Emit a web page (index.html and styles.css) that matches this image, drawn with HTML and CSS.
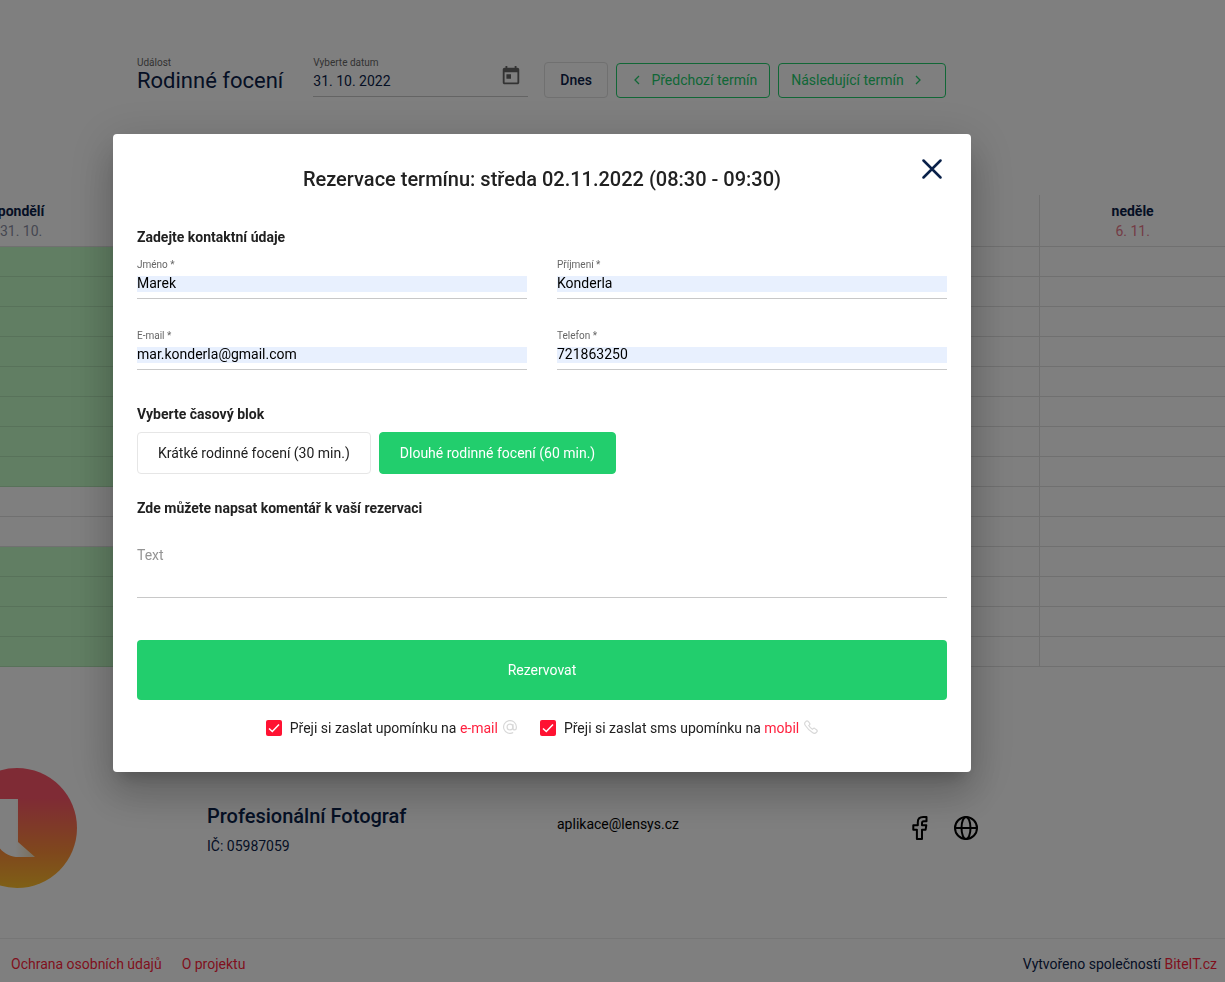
FILE: index.html
```html
<!DOCTYPE html>
<html lang="cs">
<head>
    <meta charset="UTF-8">
    <meta name="viewport" content="width=device-width, initial-scale=1.0">
    <title>Rodinné focení</title>
    <link rel="stylesheet" href="styles.css">
</head>
<body>
    <div class="page">
        <main class="content">
            <header class="toolbar">
                <div class="event">
                    <div class="small-label">Událost</div>
                    <h1>Rodinné focení</h1>
                </div>
                <div class="date-field">
                    <div class="date-text">
                        <label class="small-label" for="date">Vyberte datum</label>
                        <input type="text" id="date" value="31. 10. 2022">
                    </div>
                    <button class="icon-btn" aria-label="Otevřít kalendář">
                        <svg width="22" height="22" viewBox="0 0 24 24" fill="currentColor"><path d="M19 3h-1V1h-2v2H8V1H6v2H5c-1.1 0-2 .9-2 2v14c0 1.1.9 2 2 2h14c1.1 0 2-.9 2-2V5c0-1.1-.9-2-2-2zm0 16H5V8h14v11zM7 10h5v5H7z"/></svg>
                    </button>
                </div>
                <div class="toolbar-buttons">
                    <button class="btn btn-today">Dnes</button>
                    <button class="btn btn-outline">
                        <svg width="10" height="10" viewBox="0 0 10 10"><path d="M7 1L3 5l4 4"/></svg>
                        Předchozí termín
                    </button>
                    <button class="btn btn-outline btn-next">
                        Následující termín
                        <svg width="10" height="10" viewBox="0 0 10 10"><path d="M3 1l4 4-4 4"/></svg>
                    </button>
                </div>
            </header>

            <table class="calendar">
                <thead>
                    <tr>
                        <th>pondělí<span>31. 10.</span></th>
                        <th></th>
                        <th></th>
                        <th></th>
                        <th></th>
                        <th></th>
                        <th class="sunday">neděle<span>6. 11.</span></th>
                    </tr>
                </thead>
                <tbody>
                    <tr><td class="free"></td><td></td><td></td><td></td><td></td><td></td><td></td></tr>
                    <tr><td class="free"></td><td></td><td></td><td></td><td></td><td></td><td></td></tr>
                    <tr><td class="free"></td><td></td><td></td><td></td><td></td><td></td><td></td></tr>
                    <tr><td class="free"></td><td></td><td></td><td></td><td></td><td></td><td></td></tr>
                    <tr><td class="free"></td><td></td><td></td><td></td><td></td><td></td><td></td></tr>
                    <tr><td class="free"></td><td></td><td></td><td></td><td></td><td></td><td></td></tr>
                    <tr><td class="free"></td><td></td><td></td><td></td><td></td><td></td><td></td></tr>
                    <tr><td class="free"></td><td></td><td></td><td></td><td></td><td></td><td></td></tr>
                    <tr><td></td><td></td><td></td><td></td><td></td><td></td><td></td></tr>
                    <tr><td></td><td></td><td></td><td></td><td></td><td></td><td></td></tr>
                    <tr><td class="free"></td><td></td><td></td><td></td><td></td><td></td><td></td></tr>
                    <tr><td class="free"></td><td></td><td></td><td></td><td></td><td></td><td></td></tr>
                    <tr><td class="free"></td><td></td><td></td><td></td><td></td><td></td><td></td></tr>
                    <tr><td class="free"></td><td></td><td></td><td></td><td></td><td></td><td></td></tr>
                </tbody>
            </table>

            <section class="company">
                <svg class="logo" width="120" height="120" viewBox="0 0 120 120">
                    <defs>
                        <linearGradient id="sunset" x1="0" y1="0" x2="0" y2="1">
                            <stop offset="0.25" stop-color="#ff566a"/>
                            <stop offset="0.7" stop-color="#ff8f3a"/>
                            <stop offset="1" stop-color="#ffc02c"/>
                        </linearGradient>
                        <linearGradient id="fold" x1="0" y1="0" x2="1" y2="0">
                            <stop offset="0.5" stop-color="#fff"/>
                            <stop offset="1" stop-color="#f3dcb4"/>
                        </linearGradient>
                    </defs>
                    <circle cx="60" cy="60" r="60" fill="url(#sunset)"/>
                    <path d="M38 31h23v43l17 15H62C50 89 42 82 38 72z" fill="url(#fold)"/>
                </svg>
                <div class="company-name">
                    <h2>Profesionální Fotograf</h2>
                    <p>IČ: 05987059</p>
                </div>
                <p class="company-mail">aplikace@lensys.cz</p>
                <div class="social">
                    <a href="#" aria-label="Facebook">
                        <svg width="24" height="24" viewBox="0 0 24 24"><path d="M18.5 1h-3.300c-3.700 0-5.400 2.300-5.400 5.200v3.100H5.300v4.400h3.600V23h5.100v-9.300h3.600l.7-4.400h-4.300V7.100c0-1.300.6-1.900 1.800-1.900h2.700z"/></svg>
                    </a>
                    <a href="#" aria-label="Web">
                        <svg width="24" height="24" viewBox="0 0 24 24"><circle cx="12" cy="12" r="11"/><path d="M1 12h22"/><ellipse cx="12" cy="12" rx="4.5" ry="11"/></svg>
                    </a>
                </div>
            </section>
        </main>

        <footer class="bottom-bar">
            <nav>
                <a href="#">Ochrana osobních údajů</a>
                <a href="#">O projektu</a>
            </nav>
            <p>Vytvořeno společností <a href="#">BiteIT.cz</a></p>
        </footer>
    </div>

    <div class="overlay">
        <form class="modal" role="dialog" aria-labelledby="modal-title">
            <button type="button" class="close" aria-label="Zavřít">
                <svg width="20" height="20" viewBox="0 0 20 20"><path d="M1.500 1.500l17 17M18.500 1.500l-17 17"/></svg>
            </button>
            <h2 class="modal-title" id="modal-title">Rezervace termínu: středa 02.11.2022 (08:30 - 09:30)</h2>

            <h3>Zadejte kontaktní údaje</h3>
            <div class="fields">
                <div class="field">
                    <label class="small-label" for="firstName">Jméno *</label>
                    <input type="text" id="firstName" value="Marek">
                </div>
                <div class="field">
                    <label class="small-label" for="lastName">Příjmení *</label>
                    <input type="text" id="lastName" value="Konderla">
                </div>
                <div class="field">
                    <label class="small-label" for="email">E-mail *</label>
                    <input type="email" id="email" value="mar.konderla@gmail.com">
                </div>
                <div class="field">
                    <label class="small-label" for="phone">Telefon *</label>
                    <input type="tel" id="phone" value="721863250">
                </div>
            </div>

            <h3>Vyberte časový blok</h3>
            <div class="blocks">
                <button type="button" class="block">Krátké rodinné focení (30 min.)</button>
                <button type="button" class="block selected">Dlouhé rodinné focení (60 min.)</button>
            </div>

            <h3><label for="comment">Zde můžete napsat komentář k vaší rezervaci</label></h3>
            <textarea id="comment" placeholder="Text"></textarea>

            <button type="submit" class="submit">Rezervovat</button>

            <div class="reminders">
                <label>
                    <input type="checkbox" checked>
                    <span>Přeji si zaslat upomínku na <em>e-mail</em></span>
                    <svg width="14" height="14" viewBox="0 0 24 24"><circle cx="12" cy="12" r="5"/><path d="M17 7v6.500c0 2 1.200 3.500 3 3.500s3-1.800 3-5A11 11 0 1 0 17.500 21.500"/></svg>
                </label>
                <label>
                    <input type="checkbox" checked>
                    <span>Přeji si zaslat sms upomínku na <em>mobil</em></span>
                    <svg width="14" height="14" viewBox="0 0 24 24"><path d="M15 22c1.800 1.200 4.500 1 6-.6l.9-1c.9-.9.9-2.300 0-3.200l-3-2.500c-.9-.9-2.300-.9-3.200 0l-1.200 1.200c-2.500-1.500-4.900-3.900-6.400-6.400l1.200-1.200c.9-.9.9-2.300 0-3.200L6.800 2.100c-.9-.9-2.300-.9-3.200 0l-1 1C1 4.600.8 7.200 2 9c3.400 5.200 7.800 9.600 13 13z"/></svg>
                </label>
            </div>
        </form>
    </div>
</body>
</html>
```
FILE: styles.css
```css
* {
    margin: 0;
    padding: 0;
    box-sizing: border-box;
}

body {
    font-family: Roboto, "Liberation Sans", sans-serif;
    font-size: 14px;
    line-height: 20px;
    color: #0a2149;
    background: white;
}

button,
input,
textarea {
    font: inherit;
    color: inherit;
    background: none;
    border: none;
    outline: none;
}

button {
    cursor: pointer;
}

a {
    color: #ff1f3d;
    text-decoration: none;
}

.small-label {
    display: block;
    font-size: 10px;
    line-height: 14px;
    color: #666;
}

.page {
    min-height: 100vh;
    display: flex;
    flex-direction: column;
    overflow: hidden;
}

/* the week view is wider than the window and starts left of it */
.content {
    flex: 1;
    margin-left: -72px;
}

.toolbar {
    display: flex;
    align-items: flex-start;
    padding: 56px 0 0 209px;
    height: 195px;
}

.event {
    margin-right: 30px;
}

.event h1 {
    font-size: 22px;
    font-weight: 400;
    line-height: 22px;
    white-space: nowrap;
}

.date-field {
    display: flex;
    width: 215px;
    height: 41px;
    margin-right: 16px;
    border-bottom: 1px solid #c8c8c8;
}

.date-text {
    flex: 1;
}

.date-text input {
    width: 100%;
    height: 16px;
    margin-top: 3px;
    line-height: 16px;
    display: block;
}

.icon-btn {
    width: 22px;
    height: 22px;
    margin: 9px 6px 0 0;
    color: #666;
}

.toolbar-buttons {
    display: flex;
    align-items: flex-end;
    gap: 8px;
    padding-top: 6px;
}

.btn {
    height: 35px;
    padding: 0 12px;
    font-weight: 500;
    border: 1px solid #22ce6d;
    border-radius: 4px;
    white-space: nowrap;
}

.btn-today {
    height: 36px;
    padding: 0 15px;
    border-color: #e0e0e0;
}

.btn-outline {
    font-weight: 400;
    color: #22ce6d;
    padding: 0 12px 2px 15px;
}

.btn-outline svg {
    margin-right: 6px;
    fill: none;
    stroke: currentColor;
    stroke-width: 1.3;
}

.btn-next {
    padding: 0 22px 2px 12px;
}

.btn-next svg {
    margin: 0 0 0 6px;
}

.calendar {
    width: 100%;
    table-layout: fixed;
    border-collapse: collapse;
}

.calendar th {
    height: 51px;
    padding-top: 6px;
    font-weight: 700;
    vertical-align: top;
}

.calendar th span {
    display: block;
    font-weight: 400;
    color: #8b8fa3;
}

.calendar th.sunday span {
    color: #e8788a;
}

.calendar th,
.calendar td {
    border-left: 1px solid #e0e0e0;
    border-bottom: 1px solid #e0e0e0;
}

.calendar td {
    height: 30px;
}

.calendar td.free {
    background: #c2fcc6;
    border-color: #b0e4b4;
}

.company {
    display: grid;
    grid-template-columns: 250px 350px 351px auto;
    padding: 101px 0 50px 29px;
}

.company-name {
    padding-top: 36px;
}

.company-name h2 {
    font-size: 20px;
    font-weight: 500;
    line-height: 24px;
    margin-bottom: 8px;
}

.company-mail {
    padding-top: 46px;
    color: black;
}

.social {
    display: flex;
    align-items: flex-start;
    gap: 22px;
    padding-top: 48px;
}

.social svg {
    display: block;
    fill: none;
    stroke: black;
    stroke-width: 2;
    stroke-linejoin: round;
}

.bottom-bar {
    display: flex;
    justify-content: space-between;
    padding: 15px 8px 8px 11px;
    border-top: 1px solid #ececec;
}

.bottom-bar nav {
    display: flex;
    gap: 20px;
}

.overlay {
    position: fixed;
    inset: 0;
    display: flex;
    justify-content: center;
    align-items: flex-start;
    padding: 134px 141px 0 0;
    background: rgba(0, 0, 0, 0.5);
    overflow: auto;
}

.modal {
    position: relative;
    width: 100%;
    max-width: 858px;
    padding: 32px 24px 34px;
    background: white;
    color: #212121;
    border-radius: 4px;
    box-shadow: 0 11px 15px -7px rgba(0,0,0,0.2), 0 24px 38px 3px rgba(0,0,0,0.14), 0 9px 46px 8px rgba(0,0,0,0.12);
}

.close {
    position: absolute;
    top: 25px;
    right: 29px;
    width: 20px;
    height: 20px;
}

.close svg {
    display: block;
    stroke: #0a2149;
    stroke-width: 2.5;
    stroke-linecap: round;
}

.modal-title {
    font-size: 20px;
    font-weight: 500;
    line-height: 26px;
    text-align: center;
    margin-bottom: 35px;
}

.modal h3 {
    font-size: 14px;
    font-weight: 700;
    line-height: 20px;
}

.fields {
    display: grid;
    grid-template-columns: 1fr 1fr;
    gap: 30px;
    margin: 11px 0 34px;
}

.field {
    padding-bottom: 6px;
    border-bottom: 1px solid #c8c8c8;
}

.field input {
    display: block;
    width: 100%;
    height: 16px;
    margin-top: 4px;
    padding-bottom: 2px;
    line-height: 14px;
    color: black;
    background: #e8f0fe;
}

.blocks {
    display: flex;
    gap: 8px;
    margin: 8px 0 24px;
}

.block {
    height: 42px;
    padding: 0 20px;
    border: 1px solid #e6e6e6;
    border-radius: 4px;
}

.block.selected {
    color: white;
    background: #22ce6d;
    border-color: #22ce6d;
}

textarea {
    display: block;
    width: 100%;
    height: 53px;
    margin-top: 27px;
    border-bottom: 1px solid #c8c8c8;
    resize: none;
}

textarea::placeholder {
    color: #949494;
}

.submit {
    display: block;
    width: 100%;
    height: 60px;
    margin: 42px 0 18px;
    color: white;
    background: #22ce6d;
    border-radius: 4px;
}

.reminders {
    display: flex;
    justify-content: center;
    gap: 23px;
}

.reminders label {
    display: flex;
    align-items: center;
}

.reminders input {
    appearance: none;
    width: 16px;
    height: 16px;
    margin-right: 8px;
    border-radius: 2px;
    background: #ff1232;
}

/* tick inside the red box */
.reminders input:checked {
    background-image: url("data:image/svg+xml,%3Csvg xmlns='http://www.w3.org/2000/svg' viewBox='0 0 16 16'%3E%3Cpath d='M3 8.500l3.300 3L13 4.500' fill='none' stroke='white' stroke-width='1.500'/%3E%3C/svg%3E");
}

.reminders em {
    font-style: normal;
    color: #ff1f3d;
}

.reminders svg {
    margin: 0 0 2px 5px;
    fill: none;
    stroke: #d8d8d8;
    stroke-width: 2;
}
```
